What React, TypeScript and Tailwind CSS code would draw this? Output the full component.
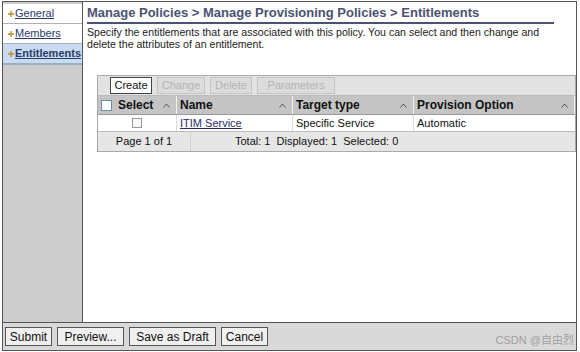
import React from 'react';

const font = { fontFamily: '"Liberation Sans", Arial, sans-serif' };

function Plus() {
  return (
    <svg width="6" height="6" viewBox="0 0 6 6" className="mr-[1px] shrink-0">
      <path d="M3 0 L3 6 M0 3 L6 3" stroke="#b8902c" strokeWidth="1.4" />
    </svg>
  );
}

function NavItem({ label, active }: { label: string; active?: boolean }) {
  return (
    <div
      className={
        active
          ? 'h-[21px] flex items-center pl-[5px] bg-[#c8dbf0] border-b-2 border-[#9aaec4] text-[11px] font-bold'
          : 'h-[20px] flex items-center pl-[5px] bg-white border-b border-[#b0b0b0] text-[11px]'
      }
    >
      <Plus />
      <span className="text-[#2b3a6a] underline whitespace-nowrap">{label}</span>
    </div>
  );
}

function ToolButton({ label, disabled, w }: { label: string; disabled?: boolean; w: string }) {
  return (
    <div
      className={`${w} h-[17px] flex items-center justify-center text-[11px] border ${
        disabled ? 'border-[#c4c4c4] bg-[#dcdcdc] text-[#b4b4b4]' : 'border-[#444] bg-white text-[#111]'
      }`}
    >
      {label}
    </div>
  );
}

function Arrow() {
  return (
    <svg width="7" height="5" viewBox="0 0 7 5">
      <path d="M0.5 4.5 L3.5 1 L6.5 4.5" stroke="#555" strokeWidth="1" fill="none" />
    </svg>
  );
}

function HeadCell({ label, w, check }: { label: string; w: string; check?: boolean }) {
  return (
    <div className={`${w} h-full flex items-center border-r border-[#f2f2f2] pl-[3px] pr-[6px]`}>
      {check && <div className="w-[11px] h-[11px] border border-[#6a8ab0] bg-white mr-[6px]" />}
      <span className="font-bold text-[12px] text-[#111] flex-1">{label}</span>
      <Arrow />
    </div>
  );
}

export default function App() {
  return (
    <div className="w-[580px] h-[352px] bg-white pl-[2px] pt-[1px] pr-[3px] pb-[1px]" style={font}>
      <div className="h-full border border-[#555] flex flex-col">
        <div className="flex-1 flex min-h-0">
          {/* left nav */}
          <div className="w-[80px] bg-[#cdcdcd] border-r border-[#555] pt-[2px]">
            <NavItem label="General" />
            <NavItem label="Members" />
            <NavItem label="Entitlements" active />
          </div>

          {/* main area */}
          <div className="flex-1 bg-white pl-[4px] pt-[2px]">
            <div className="mr-[22px] border-b-2 border-[#4b5272] pt-[1px] pb-[2px] text-[13px] font-bold text-[#4b5272] leading-[15px]">
              Manage Policies &gt; Manage Provisioning Policies &gt; Entitlements
            </div>
            <div className="mt-[2px] text-[10.6px] leading-[12px] text-[#222]">
              Specify the entitlements that are associated with this policy. You can select and then change and
              <br />
              delete the attributes of an entitlement.
            </div>

            <div className="ml-[10px] mt-[25px] border border-[#aaa] text-[11px] text-[#111]">
              <div className="h-[20px] bg-[#e2e2e2] flex items-center gap-[5px] pl-[12px] border-b border-[#bbb]">
                <ToolButton label="Create" w="w-[42px]" />
                <ToolButton label="Change" disabled w="w-[48px]" />
                <ToolButton label="Delete" disabled w="w-[42px]" />
                <ToolButton label="Parameters" disabled w="w-[78px]" />
              </div>
              <div className="h-[19px] bg-[#c4c4c4] flex border-b border-[#999]">
                <HeadCell label="Select" w="w-[79px]" check />
                <HeadCell label="Name" w="w-[116px]" />
                <HeadCell label="Target type" w="w-[121px]" />
                <HeadCell label="Provision Option" w="flex-1" />
              </div>
              <div className="h-[17px] bg-white flex items-center border-b border-[#bbb]">
                <div className="w-[79px] h-full flex items-center justify-center border-r border-[#ddd]">
                  <div className="w-[10px] h-[10px] border border-[#999] bg-[#f8f8f8]" />
                </div>
                <div className="w-[116px] h-full flex items-center pl-[3px] border-r border-[#ddd]">
                  <span className="underline text-[#2b2b6a]">ITIM Service</span>
                </div>
                <div className="w-[121px] h-full flex items-center pl-[3px] border-r border-[#ddd]">
                  Specific Service
                </div>
                <div className="flex-1 h-full flex items-center pl-[3px]">Automatic</div>
              </div>
              <div className="h-[19px] bg-[#e6e6e6] flex items-center">
                <div className="w-[93px] h-full flex items-center justify-center border-r border-[#d0d0d0]">
                  Page 1 of 1
                </div>
                <div className="flex-1 pl-[44px] whitespace-pre">Total: 1  Displayed: 1  Selected: 0</div>
              </div>
            </div>
          </div>
        </div>

        {/* bottom button bar */}
        <div className="h-[28px] bg-[#d9d9d9] border-t border-[#555] flex items-center pl-[2px] gap-[5px] text-[12px] text-[#111]">
          <div className="w-[47px] h-[19px] border border-[#555] bg-[#f0f0f0] flex items-center justify-center">Submit</div>
          <div className="w-[67px] h-[19px] border border-[#555] bg-[#f0f0f0] flex items-center justify-center">Preview...</div>
          <div className="w-[87px] h-[19px] border border-[#555] bg-[#f0f0f0] flex items-center justify-center">Save as Draft</div>
          <div className="w-[47px] h-[19px] border border-[#555] bg-[#f0f0f0] flex items-center justify-center">Cancel</div>
          <div
            className="ml-auto mr-[2px] mt-[8px] text-[11px] text-[#a0a0a0]"
            style={{ fontFamily: '"Liberation Sans", "Noto Sans CJK SC", sans-serif' }}
          >
            CSDN @自由烈
          </div>
        </div>
      </div>
    </div>
  );
}
